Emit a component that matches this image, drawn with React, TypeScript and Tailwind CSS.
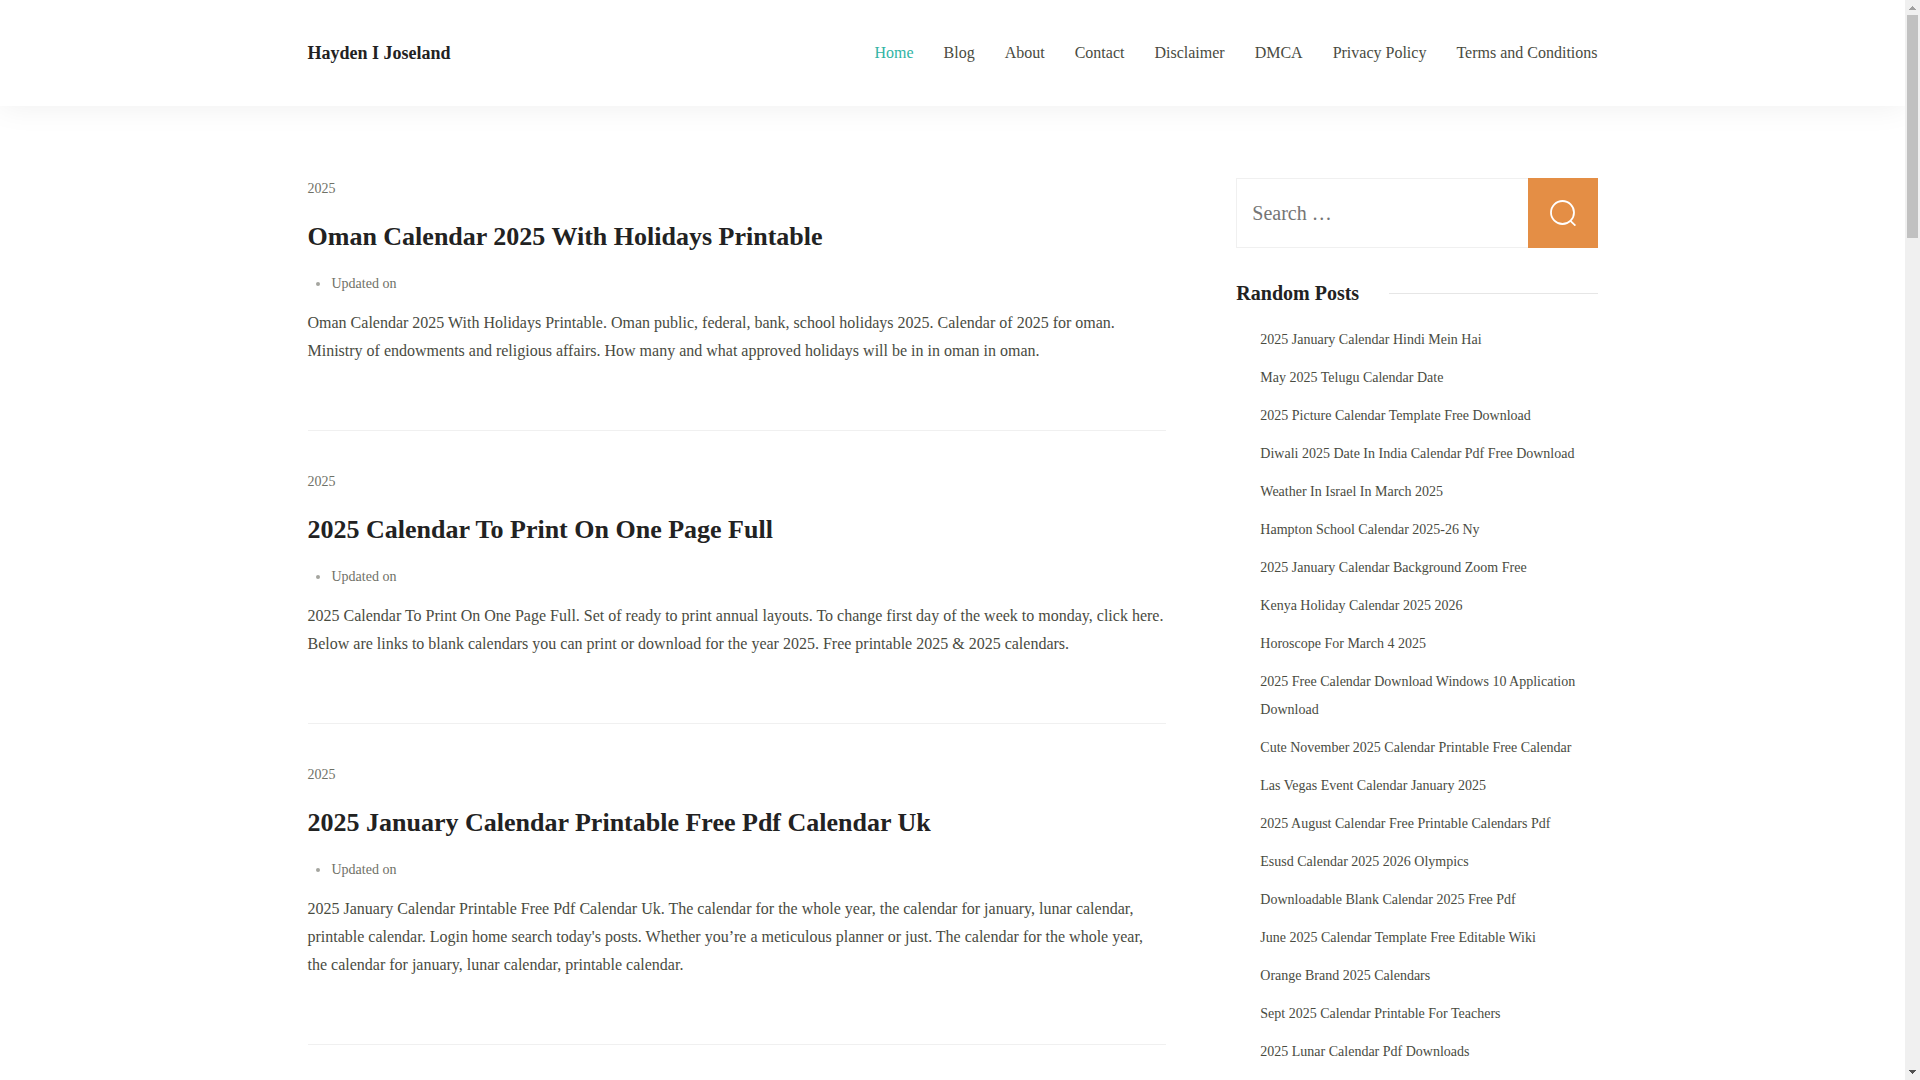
const navItems = [
  "Home",
  "Blog",
  "About",
  "Contact",
  "Disclaimer",
  "DMCA",
  "Privacy Policy",
  "Terms and Conditions",
];

const posts = [
  {
    category: "2025",
    title: "Oman Calendar 2025 With Holidays Printable",
    excerpt:
      "Oman Calendar 2025 With Holidays Printable. Oman public, federal, bank, school holidays 2025. Calendar of 2025 for oman. Ministry of endowments and religious affairs. How many and what approved holidays will be in in oman in oman.",
  },
  {
    category: "2025",
    title: "2025 Calendar To Print On One Page Full",
    excerpt:
      "2025 Calendar To Print On One Page Full. Set of ready to print annual layouts. To change first day of the week to monday, click here. Below are links to blank calendars you can print or download for the year 2025. Free printable 2025 & 2025 calendars.",
  },
  {
    category: "2025",
    title: "2025 January Calendar Printable Free Pdf Calendar Uk",
    excerpt:
      "2025 January Calendar Printable Free Pdf Calendar Uk. The calendar for the whole year, the calendar for january, lunar calendar, printable calendar. Login home search today's posts. Whether you’re a meticulous planner or just. The calendar for the whole year, the calendar for january, lunar calendar, printable calendar.",
  },
];

const randomPosts = [
  "2025 January Calendar Hindi Mein Hai",
  "May 2025 Telugu Calendar Date",
  "2025 Picture Calendar Template Free Download",
  "Diwali 2025 Date In India Calendar Pdf Free Download",
  "Weather In Israel In March 2025",
  "Hampton School Calendar 2025-26 Ny",
  "2025 January Calendar Background Zoom Free",
  "Kenya Holiday Calendar 2025 2026",
  "Horoscope For March 4 2025",
  "2025 Free Calendar Download Windows 10 Application Download",
  "Cute November 2025 Calendar Printable Free Calendar",
  "Las Vegas Event Calendar January 2025",
  "2025 August Calendar Free Printable Calendars Pdf",
  "Esusd Calendar 2025 2026 Olympics",
  "Downloadable Blank Calendar 2025 Free Pdf",
  "June 2025 Calendar Template Free Editable Wiki",
  "Orange Brand 2025 Calendars",
  "Sept 2025 Calendar Printable For Teachers",
  "2025 Lunar Calendar Pdf Downloads",
];

function Header() {
  return (
    <header className="relative bg-white py-[39px] shadow-[0_0_30px_rgba(0,0,0,0.07)]">
      <div className="mx-auto flex max-w-[1290px] items-center justify-between">
        <a href="#" className="text-lg leading-7 font-bold text-[#222]">
          Hayden I Joseland
        </a>
        <nav>
          <ul className="flex gap-[30px]">
            {navItems.map((item) => (
              <li key={item}>
                <a
                  href="#"
                  className={item === "Home" ? "text-[#30b4a4]" : "text-[#494b3f]"}
                >
                  {item}
                </a>
              </li>
            ))}
          </ul>
        </nav>
      </div>
    </header>
  );
}

function Post({ category, title, excerpt }: (typeof posts)[number]) {
  return (
    <article className="mb-10 border-b border-[#f0f0f0] pb-[65px]">
      <a href="#" className="block text-sm leading-[22px] text-[#6f7167]">
        {category}
      </a>
      <h2 className="mt-[19px] text-[26px] leading-9 font-bold text-[#222]">
        <a href="#">{title}</a>
      </h2>
      <div className="mt-[17px] flex items-center pl-2 text-sm leading-6 text-[#6f7167]">
        <span className="mr-3 size-1 rounded-full bg-[#a4a59f]" />
        Updated on
      </div>
      <p className="mt-[13px]">{excerpt}</p>
    </article>
  );
}

function SearchForm() {
  return (
    <form className="flex h-[70px]" onSubmit={(e) => e.preventDefault()}>
      <input
        type="search"
        aria-label="Search"
        placeholder="Search …"
        className="min-w-0 flex-1 border border-r-0 border-[#f0f0f0] px-[15px] text-xl outline-none placeholder:text-[#757575]"
      />
      <button
        type="submit"
        aria-label="Submit search"
        className="flex w-[70px] items-center justify-center bg-[#e48e45]"
      >
        <svg width="26" height="26" viewBox="0 0 26 26" fill="none" stroke="#fff" strokeWidth="1.8">
          <circle cx="12.5" cy="12.5" r="11.5" />
          <path d="M20.2 20.6 25.4 25.6" />
        </svg>
      </button>
    </form>
  );
}

function Sidebar() {
  return (
    <aside className="w-[28%] shrink-0">
      <SearchForm />
      <h2 className="mt-[30px] flex items-center gap-[30px] text-xl leading-[30px] font-bold text-[#222] after:h-px after:flex-1 after:bg-[#e6e6e6]">
        Random Posts
      </h2>
      <ul className="mt-[18px] flex flex-col gap-2.5 pl-6 text-sm leading-7">
        {randomPosts.map((post) => (
          <li key={post}>
            <a href="#">{post}</a>
          </li>
        ))}
      </ul>
    </aside>
  );
}

function Scrollbar() {
  return (
    <div aria-hidden="true" className="flex w-[15px] shrink-0 flex-col items-center bg-[#f0f0f0]">
      <svg className="h-[15px] w-[15px] shrink-0" viewBox="0 0 15 15" shapeRendering="crispEdges">
        <path d="M4 10h7v-1h-1v-1h-1v-1h-1v-1h-1v1h-1v1h-1v1h-1z" fill="#a0a0a0" />
      </svg>
      <div className="h-[223px] w-[11px] bg-[#c1c1c1]" />
      <svg className="mt-auto h-[15px] w-[15px] shrink-0" viewBox="0 0 15 15" shapeRendering="crispEdges">
        <path d="M4 5h7v1h-1v1h-1v1h-1v1h-1v-1h-1v-1h-1v-1h-1z" fill="#505050" />
      </svg>
    </div>
  );
}

export default function App() {
  return (
    <div className="flex h-screen overflow-hidden bg-white font-['Liberation_Serif',serif] text-base leading-7 text-[#494b3f]">
      <div className="min-w-0 flex-1 overflow-hidden">
        <Header />
        <div className="mx-auto flex max-w-[1290px] gap-[70px] pt-[72px]">
          <main className="min-w-0 flex-1">
            {posts.map((post) => (
              <Post key={post.title} {...post} />
            ))}
          </main>
          <Sidebar />
        </div>
      </div>
      <Scrollbar />
    </div>
  );
}
